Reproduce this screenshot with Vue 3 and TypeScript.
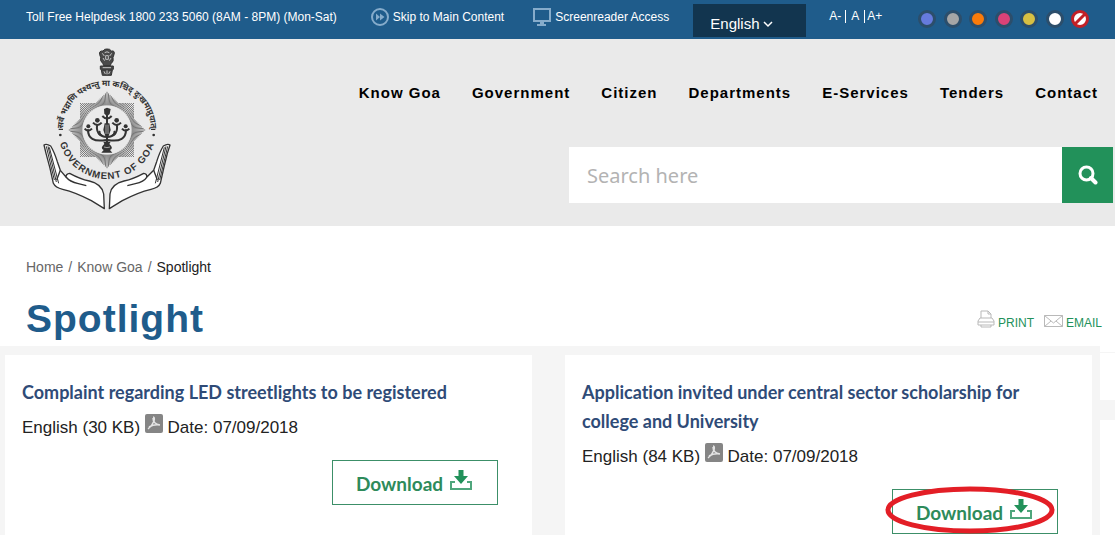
<script setup lang="ts">
import { ref } from 'vue'

interface Notice {
  title: string
  size: string
  date: string
  circled: boolean
}

const navItems: string[] = [
  'Know Goa', 'Government', 'Citizen', 'Departments', 'E-Services', 'Tenders', 'Contact',
]

const themes: string[] = ['blue', 'grey', 'orange', 'pink', 'yellow', 'white']

const notices: Notice[] = [
  { title: 'Complaint regarding LED streetlights to be registered', size: '30 KB', date: '07/09/2018', circled: false },
  { title: 'Application invited under central sector scholarship for college and University', size: '84 KB', date: '07/09/2018', circled: true },
]

const language = ref('English')
const query = ref('')

// Eight-pointed sunburst: rays running from an inner circle out to the edge of two crossed squares.
const rays: string = Array.from({ length: 144 }, (_, i) => {
  const deg = i * 2.5
  const offset = Math.abs(((deg + 22.5) % 45) - 22.5)
  const outer = 81 / Math.cos(((45 - offset) * Math.PI) / 180)
  const a = (deg * Math.PI) / 180
  const c = Math.cos(a)
  const s = Math.sin(a)
  return `M${(231 + 74 * c).toFixed(1)} ${(270 + 74 * s).toFixed(1)}L${(231 + outer * c).toFixed(1)} ${(270 + outer * s).toFixed(1)}`
}).join('')
</script>

<template>
  <div class="page">
    <div class="topbar">
      <span class="helpdesk">Toll Free Helpdesk 1800 233 5060 (8AM - 8PM) (Mon-Sat)</span>
      <a class="toplink skip" href="#content">
        <svg width="18" height="18" viewBox="0 0 18 18" aria-hidden="true">
          <circle cx="9" cy="9" r="8" fill="none" stroke="#86accb" stroke-width="2" />
          <path d="M5 5.500 9 9 5 12.500ZM9 5.500 13.500 9 9 12.500Z" fill="#86accb" />
        </svg>
        Skip to Main Content
      </a>
      <a class="toplink reader" href="#reader">
        <svg width="18" height="18" viewBox="0 0 18 18" aria-hidden="true">
          <path d="M1 1H17V13H1Z" fill="none" stroke="#86accb" stroke-width="2" />
          <path d="M7 13h4v3h2v2H4v-2h3z" fill="#86accb" />
        </svg>
        Screenreader Access
      </a>
      <div class="language">
        <select v-model="language" aria-label="Language">
          <option>English</option>
        </select>
        <svg width="10" height="8" viewBox="0 0 10 8" aria-hidden="true">
          <path d="M1 2 5 6 9 2" fill="none" stroke="#fff" stroke-width="1.500" />
        </svg>
      </div>
      <div class="sizes">
        <button type="button">A-</button>
        <button type="button">A</button>
        <button type="button">A+</button>
      </div>
      <div class="themes">
        <button v-for="t in themes" :key="t" type="button" class="theme" :class="t" :aria-label="t + ' theme'"></button>
        <button type="button" class="reset" aria-label="No theme">
          <svg width="18" height="18" viewBox="0 0 18 18" aria-hidden="true">
            <circle cx="9" cy="9" r="7.500" fill="#fff" stroke="#c22027" stroke-width="3" />
            <path d="M4 14 14 4" stroke="#c22027" stroke-width="3" />
          </svg>
        </button>
      </div>
    </div>

    <header class="header">
      <a class="logo" href="#home" aria-label="Government of Goa">
        <svg width="150" height="180" viewBox="0 0 450 540">
          <defs>
            <path id="motto-arc" d="M99 270A132 132 0 0 1 363 270" />
            <path id="name-arc" d="M84 270A147 147 0 0 0 378 270" />
          </defs>
          <!-- lion capital -->
          <g fill="#4a4a4a" stroke="#333" stroke-width="3">
            <path d="M209 44Q206 32 219 33Q223 26 231 27Q240 26 244 33Q256 31 252 44L249 52Q252 65 244 70L240 78H222L218 70Q209 63 212 52Z" />
            <path d="M211 78H250V88H211ZM214 90H247L244 106H217Z" />
          </g>
          <path d="M217 40l6 8M245 40l-6 8M224 38q7-5 14 0M219 54l5 8M243 54l-5 8M227 47h8v11h-8zM218 83h25M231 91v12M222 94l4 8M240 94l-4 8" fill="none" stroke="#c4c4c4" stroke-width="3" />
          <text class="motto"><textPath href="#motto-arc" startOffset="50%" text-anchor="middle">सर्वे भद्राणि पश्यन्तु मा कश्चिद् दुःखमाप्नुयात्</textPath></text>
          <path d="M86 268h13M363 268h13" stroke="#333" stroke-width="4" />
          <circle cx="91" cy="285" r="4" fill="#333" />
          <circle cx="371" cy="285" r="4" fill="#333" />
          <path :d="rays" stroke="#3d3d3d" stroke-width="2" fill="none" />
          <!-- lamp -->
          <g fill="none" stroke="#333" stroke-width="6">
            <path d="M231 224V310M228 300Q173 309 174 268M234 300Q289 309 288 268M228 291Q195 286 202 252M234 291Q267 286 260 252" />
            <path d="M217 228q14 15 28 0M189 248q13 14 26 0M247 248q13 14 26 0M164 266q10 12 22 0M276 266q10 12 22 0" />
          </g>
          <g fill="#333">
            <path d="M222 207l9-4 11 4-3 15-8 7-8-8Z" />
            <circle cx="202" cy="241" r="7" /><circle cx="260" cy="241" r="7" />
            <circle cx="175" cy="259" r="6" /><circle cx="287" cy="259" r="6" />
            <path d="M220 305h22l-4 7q14 12 2 18l7 8H214l7-8q-12-6 2-18Z" />
            <path d="M224 250h14l4 20-6 18h-10l-6-18Z" />
            <path d="M210 273q-9 9 5 13M252 273q9 9-5 13" stroke="#333" stroke-width="5" />
          </g>
          <path d="M228 254v28M234 254v28M222 321q9 4 18 0" fill="none" stroke="#dedede" stroke-width="2" />
          <!-- cupped hands -->
          <g fill="#fff" stroke="#333" stroke-width="4" stroke-linejoin="round">
            <path d="M42 315Q49 310 62 318Q73 336 82 365L91 391L108 411Q108 401 119 400Q150 417 178 423Q216 432 221 462L223 506L184 482Q137 457 98 448Q76 443 70 430Q61 384 48 340Z" />
            <path d="M420 315Q413 310 400 318Q389 336 380 365L371 391L350 412Q352 401 341 400Q310 417 282 423Q244 432 240 462L238 506L277 482Q324 457 363 448Q386 443 391 430Q401 384 412 340Z" />
            <path d="M108 411Q119 425 145 431L169 437M350 412Q342 425 316 431L292 437M91 391L80 420M371 391L382 420" fill="none" />
            <path d="M49 319L73 420M54 319L79 426M58 322L86 430M413 319L389 420M408 319L383 426M403 322L376 430" fill="none" stroke-width="3" />
          </g>
          <text class="state"><textPath href="#name-arc" startOffset="50%" text-anchor="middle">GOVERNMENT OF GOA</textPath></text>
        </svg>
      </a>
      <div class="header-main">
        <nav class="nav" aria-label="Main">
          <a v-for="item in navItems" :key="item" href="#">{{ item }}</a>
        </nav>
        <form class="search" role="search" @submit.prevent>
          <input v-model="query" type="text" placeholder="Search here" aria-label="Search" />
          <button type="submit" aria-label="Search">
            <svg width="20" height="20" viewBox="0 0 20 20" aria-hidden="true">
              <circle cx="8.500" cy="8.500" r="6.500" fill="none" stroke="#fff" stroke-width="3" />
              <path d="M13 13 17.500 17.500" stroke="#fff" stroke-width="4" stroke-linecap="round" />
            </svg>
          </button>
        </form>
      </div>
    </header>

    <nav class="crumbs" aria-label="Breadcrumb">
      <a href="#">Home</a>
      <i>/</i>
      <a href="#">Know Goa</a>
      <i>/</i>
      <span>Spotlight</span>
    </nav>

    <div class="heading">
      <h1>Spotlight</h1>
      <div class="actions">
        <a href="#print">
          <svg width="18" height="18" viewBox="0 0 18 18" aria-hidden="true">
            <path d="M4 8V1h7l3 3v4M11 1v3h3M3 8h12l2 3v4H1v-4zM1 12h16M4 15v2h10v-2" fill="none" stroke="#b9b9b9" />
          </svg>
          PRINT
        </a>
        <a href="#email">
          <svg width="19" height="18" viewBox="0 0 19 18" aria-hidden="true">
            <path d="M.500 5.500h18v11H.500zM.500 5.500 9.500 13 18.500 5.500M.500 16.500 7 11M18.500 16.500 12 11" fill="none" stroke="#b9b9b9" />
          </svg>
          EMAIL
        </a>
      </div>
    </div>

    <main id="content" class="content">
      <section class="notices">
        <article v-for="n in notices" :key="n.title" class="card">
          <h2>{{ n.title }}</h2>
          <p>
            English ({{ n.size }})
            <svg class="pdf" width="18" height="19" viewBox="0 0 18 19" role="img" aria-label="PDF">
              <rect width="18" height="19" rx="2" fill="#858585" />
              <path d="M8 3q2 0 1 4Q7 12 3 15M8 4q0 6 7 7M4 13q5-3 11-2" fill="none" stroke="#e4e4e4" stroke-width="1.500" />
            </svg>
            Date: {{ n.date }}
          </p>
          <a class="download" href="#download">
            Download
            <svg width="22" height="21" viewBox="0 0 22 21" aria-hidden="true">
              <path d="M8.500 0h5v6H18l-7 8-7-8h4.500z" fill="#22915a" />
              <path d="M5 12H1v7h20v-7h-4" fill="none" stroke="#4fa67c" stroke-width="2" />
            </svg>
            <svg v-if="n.circled" class="ring" viewBox="0 0 170 48" aria-hidden="true">
              <ellipse cx="85" cy="24" rx="82" ry="21" fill="none" stroke="#e31e26" stroke-width="5" />
            </svg>
          </a>
        </article>
      </section>
      <aside class="side"><div class="side-box"></div></aside>
    </main>
  </div>
</template>

<style>
body {
  margin: 0;
  background: #fff;
}
</style>

<style scoped>
.page {
  font-family: "Liberation Sans", Arial, sans-serif;
  color: #222;
  padding-bottom: 1px;
}
a {
  color: inherit;
  text-decoration: none;
}
button {
  font: inherit;
  color: inherit;
  border: 0;
  padding: 0;
  background: none;
}
.topbar {
  display: flex;
  align-items: flex-start;
  height: 39px;
  background: #1f5c8b;
  color: #fff;
  font-size: 12px;
  line-height: 18px;
}
.helpdesk {
  margin: 8px 0 0 26px;
}
.toplink {
  display: flex;
  gap: 4px;
  margin-top: 8px;
}
.skip {
  margin-left: 34px;
}
.reader {
  margin-left: 29px;
}
.language {
  position: relative;
  margin: 4px 0 0 24px;
  width: 113px;
  height: 33px;
  background: #12354f;
}
.language select {
  appearance: none;
  width: 100%;
  height: 100%;
  border: 0;
  padding: 6px 0 0 17px;
  background: transparent;
  color: #fff;
  font: 15px "Liberation Sans", Arial, sans-serif;
}
.language option {
  color: #222;
}
.language svg {
  position: absolute;
  left: 70px;
  top: 16px;
  pointer-events: none;
}
.sizes {
  display: flex;
  margin: 10px 0 0 23px;
  line-height: 13px;
}
.sizes button + button {
  border-left: 1px solid #fff;
}
.sizes button:nth-child(1) {
  padding-right: 4px;
}
.sizes button:nth-child(2) {
  padding: 0 5px;
}
.sizes button:nth-child(3) {
  padding-left: 2px;
}
.themes {
  display: flex;
  align-items: center;
  justify-content: space-between;
  width: 171px;
  margin: 10px 26px 0 auto;
  height: 18px;
}
.theme {
  width: 18px;
  height: 18px;
  border: 3px solid #2c4e6b;
  border-radius: 50%;
}
.blue { background: #667bdd; }
.grey { background: #a6a6a6; }
.orange { background: #fb7b0a; }
.pink { background: #db4277; }
.yellow { background: #d8c043; }
.white { background: #fff; }
.reset {
  height: 18px;
}
.reset svg {
  display: block;
}
.header {
  display: flex;
  justify-content: space-between;
  padding: 1px 2px 6px 30px;
  background: #eaeaea;
}
.logo svg {
  display: block;
}
.motto {
  font: bold 25px "Noto Sans Devanagari", "Noto Sans", sans-serif;
  fill: #333;
}
.state {
  font: bold 29px "Liberation Sans", Arial, sans-serif;
  letter-spacing: 3px;
  fill: #333;
}
.header-main {
  display: flex;
  flex-direction: column;
  align-items: flex-end;
}
.nav {
  display: flex;
  gap: 31px;
  margin: 43px 15px 0 0;
  color: #000;
  font-size: 15px;
  font-weight: bold;
  line-height: 20px;
  letter-spacing: 1px;
}
.search {
  display: flex;
  width: 544px;
  height: 56px;
  margin-top: 44px;
}
.search input {
  flex: 1;
  min-width: 0;
  border: 0;
  padding: 0 18px;
  background: #fff;
  color: #333;
  font: 20px "Noto Sans", sans-serif;
}
.search input::placeholder {
  color: #b3b3b3;
  opacity: 1;
}
.search button {
  display: flex;
  align-items: center;
  justify-content: center;
  width: 51px;
  background: #22915a;
}
.crumbs {
  display: flex;
  gap: 5px;
  padding: 32px 26px 0;
  color: #666;
  font-size: 14px;
  line-height: 18px;
}
.crumbs i {
  font-style: normal;
}
.crumbs span {
  color: #222;
}
.heading {
  display: flex;
  justify-content: space-between;
  align-items: flex-start;
  height: 70px;
  padding: 0 13px 0 26px;
}
h1 {
  margin: 21px 0 0;
  color: #1f5c8b;
  font-size: 39px;
  line-height: 44px;
  letter-spacing: 1px;
}
.actions {
  display: flex;
  gap: 10px;
  margin-top: 34px;
  color: #22915a;
  font-size: 12px;
  line-height: 26px;
}
.actions a {
  display: flex;
  gap: 3px;
}
.content {
  display: flex;
}
.notices {
  flex: 1;
  display: grid;
  grid-template-columns: 1fr 1fr;
  gap: 33px;
  padding: 9px 8px 0 5px;
  background: #f5f5f5;
}
.card {
  display: flex;
  flex-direction: column;
  padding: 23px 34px 1px 17px;
  background: #fff;
}
.card h2 {
  margin: 0;
  color: #2f4b77;
  font: bold 18px/29px Lato, sans-serif;
  font-variant-ligatures: none;
}
.card p {
  margin: 6px 0 18px;
  font-size: 17px;
  line-height: 29px;
}
.pdf {
  vertical-align: 0;
}
.download {
  position: relative;
  align-self: flex-end;
  display: flex;
  gap: 7px;
  box-sizing: border-box;
  width: 166px;
  height: 45px;
  padding: 9px 0 0 23px;
  border: 1px solid #3c8f68;
  color: #2e8b5b;
  font: bold 19px/28px Lato, sans-serif;
}
.ring {
  position: absolute;
  left: -8px;
  top: -4px;
  width: 170px;
  height: 48px;
}
.side {
  width: 15px;
  padding-top: 6px;
}
.side-box {
  height: 47px;
  border-top: 1px solid #f5f5f5;
  border-bottom: 20px solid #f5f5f5;
}
</style>
